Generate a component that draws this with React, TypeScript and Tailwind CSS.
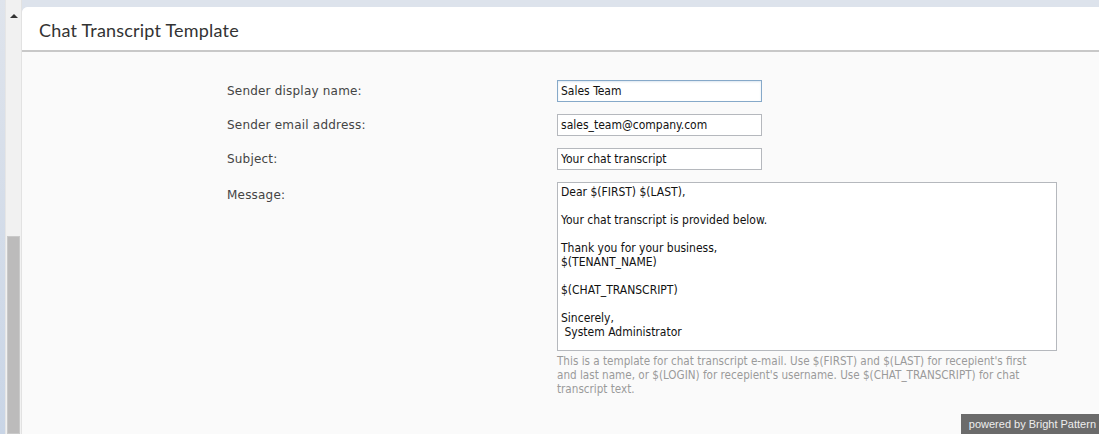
import { useState } from "react"

const message = `Dear $(FIRST) $(LAST),

Your chat transcript is provided below.

Thank you for your business,
$(TENANT_NAME)

$(CHAT_TRANSCRIPT)

Sincerely,
 System Administrator`

const labelFont = { fontFamily: '"DejaVu Sans", Verdana, sans-serif' }
const fieldFont = { fontFamily: '"DejaVu Sans Condensed", "DejaVu Sans", Tahoma, sans-serif' }

function Field({ label, value, focused }: { label: string; value: string; focused?: boolean }) {
  const [val, setVal] = useState(value)
  return (
    <div className="flex items-center h-[22px]">
      <div className="w-[330px] text-[12px] text-[#444] tracking-[0.2px]" style={labelFont}>
        {label}
      </div>
      <input
        value={val}
        onChange={(e) => setVal(e.target.value)}
        className={
          focused
            ? "w-[205px] h-[22px] px-[3px] text-[12px] text-[#111] bg-white border border-[#86a9c9] shadow-[inset_0_1px_2px_rgba(120,160,200,0.25)] outline-none"
            : "w-[205px] h-[22px] px-[3px] text-[12px] text-[#111] bg-white border border-[#b5b8bd] outline-none"
        }
        style={fieldFont}
      />
    </div>
  )
}

export default function App() {
  const [text, setText] = useState(message)

  return (
    <div className="w-[1099px] h-[434px] flex overflow-hidden bg-[#dde3ec]">
      {/* left scroll strip */}
      <div className="w-[22px] h-full flex">
        <div className="w-[5px] h-full bg-gradient-to-b from-[#dfe4ec] to-[#c9d5e6]" />
        <div className="w-[16px] h-full bg-[#f1f1f1] border-l border-[#e6e6e6] flex flex-col items-center">
          <div className="mt-[14px] w-0 h-0 border-l-[4px] border-r-[4px] border-b-[4px] border-l-transparent border-r-transparent border-b-[#333]" />
          <div className="mt-[218px] w-[13px] flex-1 bg-[#bcbbbb] border border-[#c9c9c9]" />
        </div>
        <div className="w-[1px] h-full bg-[#e2e2e2]" />
      </div>

      {/* panel */}
      <div className="flex-1 mt-[7px] rounded-tl-[6px] bg-[#fafafa] flex flex-col relative">
        <div className="h-[45px] pt-[3px] bg-white rounded-tl-[6px] border-b-2 border-[#c8c8c8] flex items-center pl-[17px]">
          <h1
            className="text-[18px] text-[#333] tracking-[0.2px]"
            style={{ fontFamily: '"Lato", "Open Sans", sans-serif' }}
          >
            Chat Transcript Template
          </h1>
        </div>

        <div className="pl-[205px] pt-[28px] flex flex-col gap-[12px]">
          <Field label="Sender display name:" value="Sales Team" focused />
          <Field label="Sender email address:" value="sales_team@company.com" />
          <Field label="Subject:" value="Your chat transcript" />
          <div className="flex items-start">
            <div className="w-[330px] pt-[4px] text-[12px] text-[#444] tracking-[0.2px]" style={labelFont}>
              Message:
            </div>
            <div className="flex flex-col">
              <textarea
                value={text}
                onChange={(e) => setText(e.target.value)}
                className="w-[500px] h-[169px] px-[3px] pt-[2px] text-[12px] leading-[14px] text-[#111] bg-white border border-[#b5b8bd] outline-none resize-none"
                style={fieldFont}
              />
              <p className="w-[490px] mt-[3px] text-[11.6px] leading-[14px] text-[#9a9a9a]" style={fieldFont}>
                This is a template for chat transcript e-mail. Use $(FIRST) and $(LAST) for recepient's first and
                last name, or $(LOGIN) for recepient's username. Use $(CHAT_TRANSCRIPT) for chat transcript text.
              </p>
            </div>
          </div>
        </div>

        <div
          className="absolute right-0 bottom-0 h-[20px] pl-[8px] pr-[3px] bg-[#6b6b6b] text-[11px] text-[#eeeeee] flex items-center"
          style={{ fontFamily: '"Liberation Sans", Arial, sans-serif' }}
        >
          powered by Bright Pattern
        </div>
      </div>
    </div>
  )
}
